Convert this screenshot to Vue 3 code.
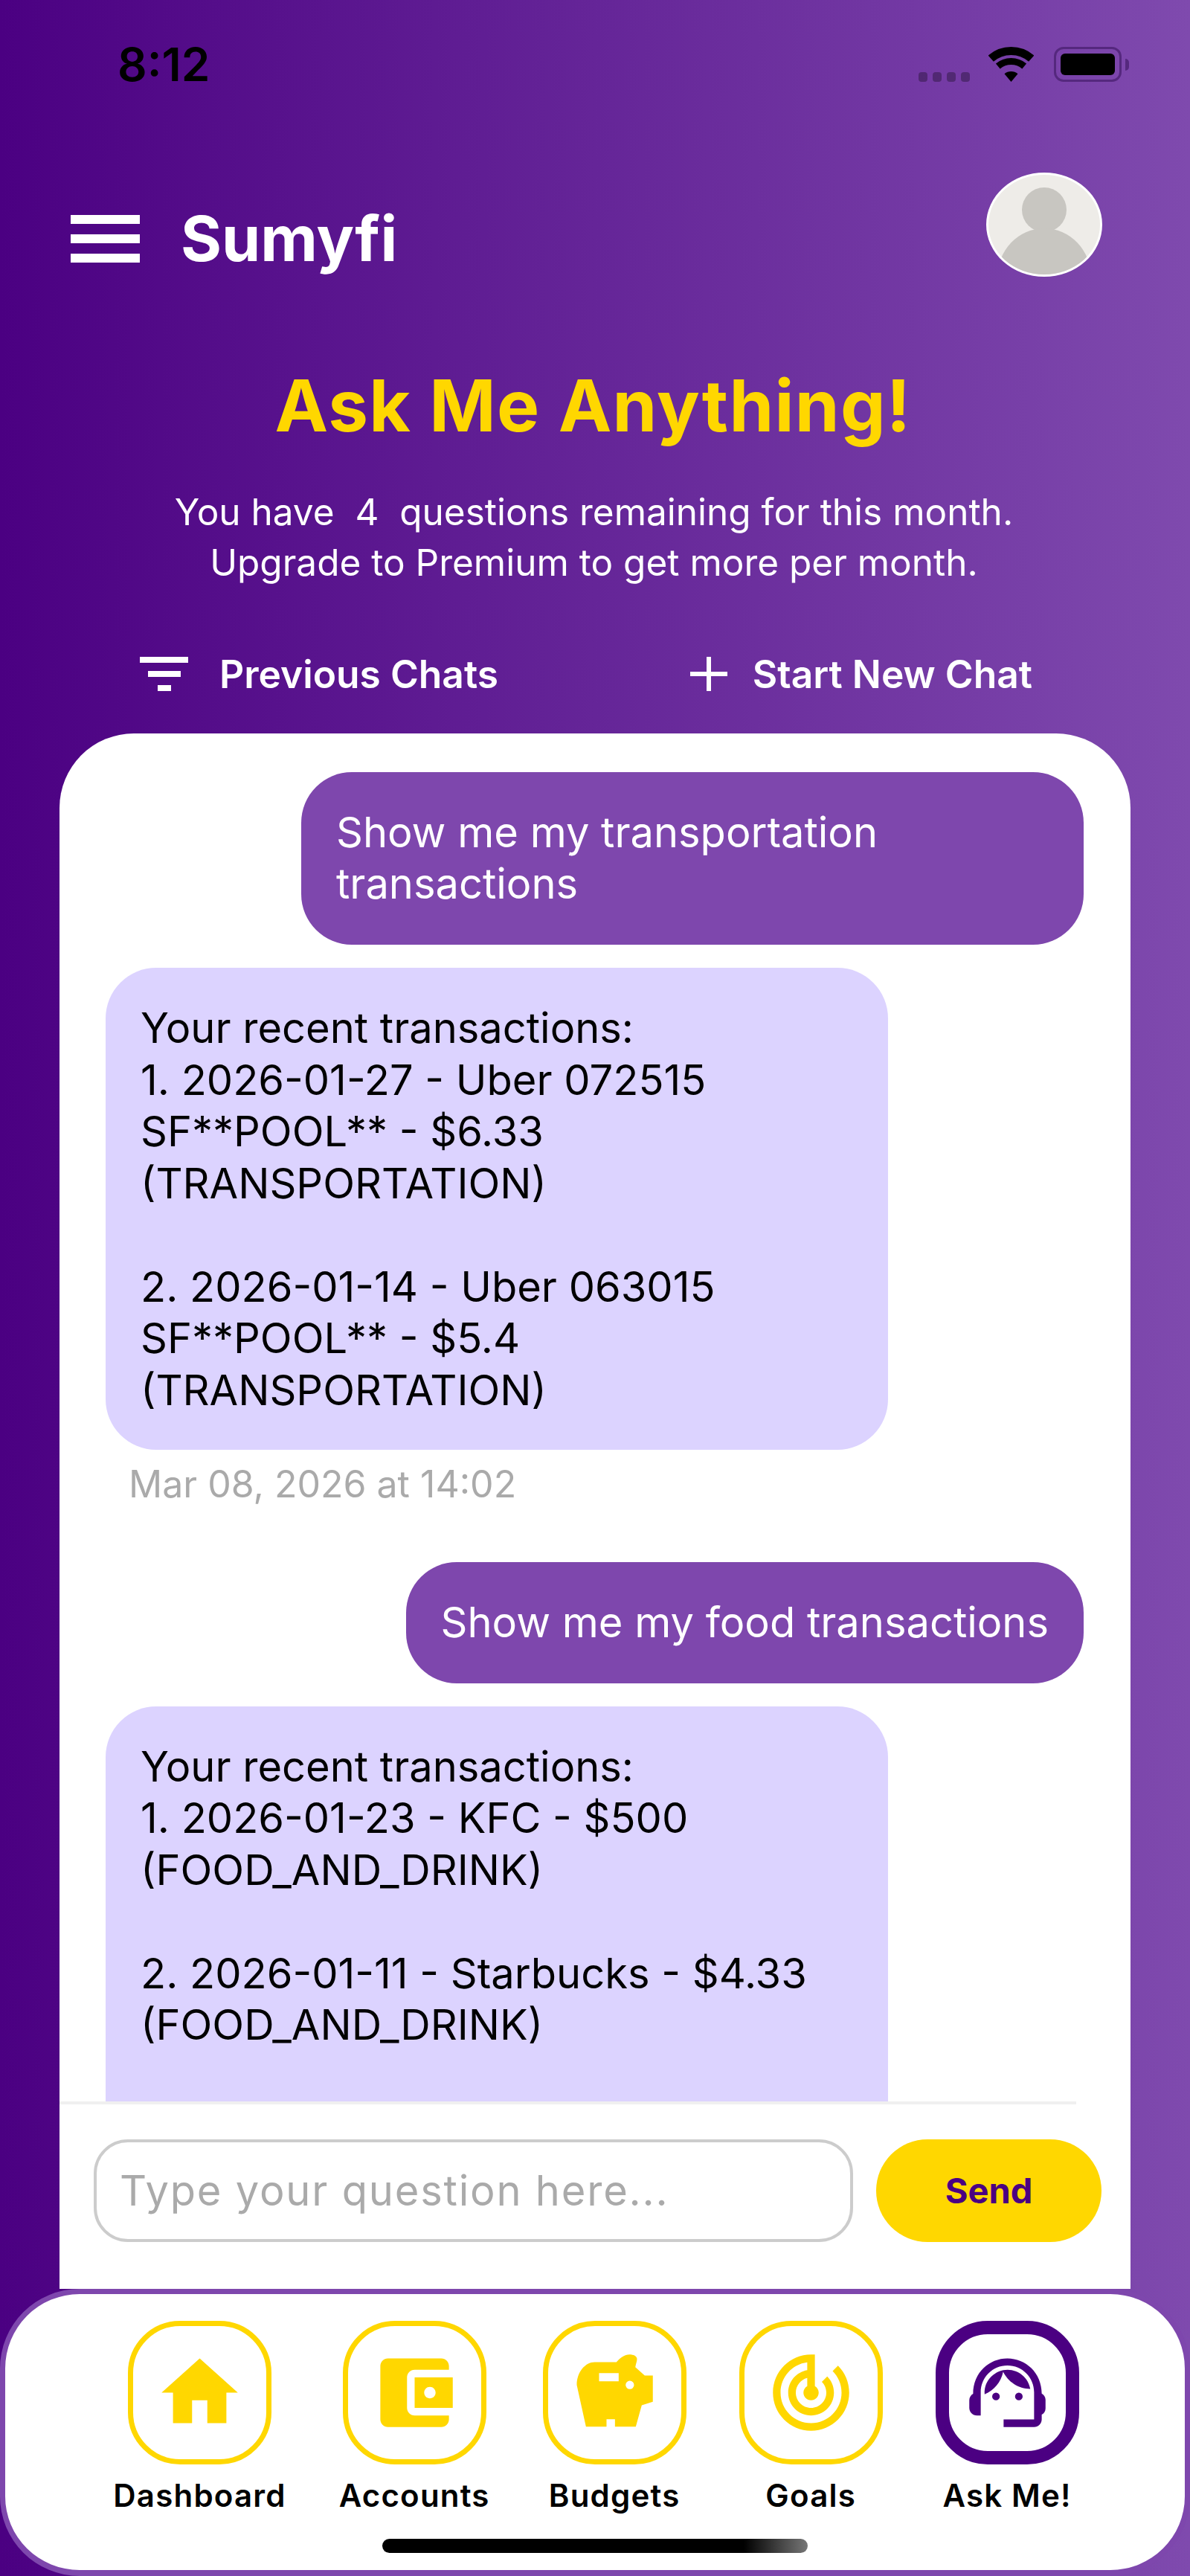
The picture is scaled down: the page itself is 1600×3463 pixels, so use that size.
<script setup>
import { ref } from 'vue';

const question = ref('');

const chats = [
  {
    ask: 'Show me my transportation transactions',
    answer: 'Your recent transactions:\n1. 2026-01-27 - Uber 072515\nSF**POOL** - $6.33\n(TRANSPORTATION)\n\n2. 2026-01-14 - Uber 063015\nSF**POOL** - $5.4\n(TRANSPORTATION)',
    time: 'Mar 08, 2026 at 14:02',
  },
  {
    ask: 'Show me my food transactions',
    answer: 'Your recent transactions:\n1. 2026-01-23 - KFC - $500\n(FOOD_AND_DRINK)\n\n2. 2026-01-11 - Starbucks - $4.33\n(FOOD_AND_DRINK)',
    time: '',
  },
];

const tabs = [
  { label: 'Dashboard', paths: ['M10 20v-6h4v6h5v-8h3L12 3 2 12h3v8z'] },
  {
    label: 'Accounts',
    paths: ['M21 18v1c0 1.1-.9 2-2 2H5c-1.11 0-2-.9-2-2V5c0-1.1.89-2 2-2h14c1.1 0 2 .9 2 2v1h-9c-1.11 0-2 .9-2 2v8c0 1.1.89 2 2 2h9zm-9-2h10V8H12v8zm4-2.5c-.83 0-1.5-.67-1.5-1.5s.67-1.5 1.5-1.5 1.5.67 1.5 1.5-.67 1.5-1.5 1.5z'],
  },
  {
    label: 'Budgets',
    paths: ['M2.05 9.98C2.05 6.6 4.3 4 6.73 4h5.72c.9-1.2 2.2-2 3.4-2.02 1.1 0 2 .4 2 1.2 0 .6-.3 1.3-.44 2.12L19.87 7.51H22v6.9l-2.91.91-1.56 5.59h-5.46v-1.95H9.85v1.95H4.46zM7.9 6.86V9h5.14V6.86zM15.97 8.88a1.1 1.1 0 1 0 0 2.2 1.1 1.1 0 0 0 0-2.2z'],
  },
  {
    label: 'Goals',
    paths: ['M19.07 4.93l-1.41 1.41C19.1 7.79 20 9.79 20 12c0 4.42-3.58 8-8 8s-8-3.58-8-8c0-4.08 3.05-7.44 7-7.93v2.02C8.16 6.57 6 9.03 6 12c0 3.31 2.69 6 6 6s6-2.69 6-6c0-1.66-.67-3.16-1.76-4.24l-1.41 1.41C15.55 9.9 16 10.9 16 12c0 2.21-1.79 4-4 4s-4-1.79-4-4c0-1.86 1.28-3.41 3-3.86v2.14c-.6.35-1 .98-1 1.72 0 1.1.9 2 2 2s2-.9 2-2c0-.74-.4-1.38-1-1.72V2h-1C6.48 2 2 6.48 2 12s4.48 10 10 10 10-4.48 10-10c0-2.76-1.12-5.26-2.93-7.07z'],
  },
  {
    label: 'Ask Me!',
    active: true,
    paths: [
      'M21 12.22C21 6.73 16.74 3 12 3c-4.69 0-9 3.65-9 9.28-.6.34-1 .98-1 1.72v2c0 1.1.9 2 2 2h1v-6.1c0-3.87 3.13-7 7-7s7 3.13 7 7V19h-8v2h8c1.1 0 2-.9 2-2v-1.22c.59-.31 1-.92 1-1.64v-2.3c0-.7-.41-1.31-1-1.62z',
      'M8 13a1 1 0 1 0 2 0 1 1 0 0 0-2 0zM14 13a1 1 0 1 0 2 0 1 1 0 0 0-2 0z',
      'M18 11.03C17.52 8.18 15.04 6 12.05 6c-3.03 0-6.29 2.51-6.03 6.45 2.47-1.01 4.33-3.21 4.86-5.89 1.31 2.63 4 4.44 7.12 4.47z',
    ],
  },
];
</script>

<template>
  <div class="screen">
    <div class="status">
      <span class="clock">8:12</span>
      <div class="status-icons">
        <div class="signal"><i></i><i></i><i></i><i></i></div>
        <svg class="wifi" viewBox="0 0 61 47" fill="none" stroke="#000">
          <path d="M3.3 15.7A41.5 41.5 0 0 1 57.7 15.7" stroke-width="11" />
          <path d="M12.8 26A27.5 27.5 0 0 1 48.2 26" stroke-width="9" />
          <path d="M21.5 36.3L30.5 47L39.5 36.3A14 14 0 0 0 21.5 36.3Z" fill="#000" stroke="none" />
        </svg>
        <div class="battery"><span></span></div>
        <div class="battery-nub"></div>
      </div>
    </div>

    <header class="top">
      <div class="brand">
        <div class="burger"><span></span><span></span><span></span></div>
        <span class="brand-name">Sumyfi</span>
      </div>
      <div class="avatar">
        <svg viewBox="0 0 150 134">
          <ellipse cx="75" cy="47" rx="30" ry="30" fill="#c8c6c1" />
          <ellipse cx="75" cy="138" rx="63" ry="66" fill="#c8c6c1" />
        </svg>
      </div>
    </header>

    <h1 class="title">Ask Me Anything!</h1>
    <p class="intro">You have&nbsp; 4&nbsp; questions remaining for this month.<br />Upgrade to Premium to get more per month.</p>

    <div class="actions">
      <div class="action">
        <div class="filter-icon"><span></span><span></span><span></span></div>
        <span>Previous Chats</span>
      </div>
      <div class="action action-new">
        <svg class="plus-icon" viewBox="0 0 50 50"><path d="M22 2h6v20h22v6H28v20h-6V28H0v-6h22z" fill="#fff" /></svg>
        <span>Start New Chat</span>
      </div>
    </div>

    <main class="card">
      <div class="messages">
        <section v-for="chat in chats" :key="chat.ask" class="group">
          <div class="bubble user">{{ chat.ask }}</div>
          <div class="bubble bot">{{ chat.answer }}</div>
          <div v-if="chat.time" class="stamp">{{ chat.time }}</div>
        </section>
      </div>
      <div class="divider"></div>
      <div class="composer">
        <input v-model="question" class="question" type="text" placeholder="Type your question here..." />
        <button class="send" type="button">Send</button>
      </div>
    </main>

    <nav class="tabbar">
      <div class="tabs">
        <div v-for="tab in tabs" :key="tab.label" class="tab" :class="{ active: tab.active }">
          <div class="tab-box">
            <svg viewBox="0 0 24 24"><path v-for="d in tab.paths" :key="d" :d="d" fill-rule="evenodd" /></svg>
          </div>
          <span class="tab-label">{{ tab.label }}</span>
        </div>
      </div>
      <div class="home-bar"></div>
    </nav>
  </div>
</template>

<style scoped>
.screen {
  display: flex;
  flex-direction: column;
  width: 1600px;
  height: 3463px;
  overflow: hidden;
  background: linear-gradient(90deg, #4b0082, #7f4aae);
  font-family: Inter, "Liberation Sans", sans-serif;
  color: #fff;
}

/* status bar */
.status {
  display: flex;
  justify-content: space-between;
  height: 232px;
  padding: 0 82px 0 158px;
  box-sizing: border-box;
}

.clock {
  margin-top: 51px;
  font-size: 62px;
  line-height: 72px;
  font-weight: 600;
  color: #000;
}

.status-icons {
  display: flex;
  align-items: flex-start;
  padding-top: 63px;
}

.signal {
  display: flex;
  gap: 7px;
  margin-top: 34px;
  margin-right: 25px;
}

.signal i {
  width: 12px;
  height: 13px;
  border-radius: 4px;
  background: rgba(0, 0, 0, 0.3);
}

.wifi {
  width: 61px;
  height: 47px;
  margin-right: 27px;
}

.battery {
  box-sizing: border-box;
  width: 91px;
  height: 47px;
  padding: 6px;
  border: 3px solid #55287e;
  border-radius: 13px;
}

.battery span {
  display: block;
  height: 100%;
  border-radius: 6px;
  background: #000;
}

.battery-nub {
  width: 5px;
  height: 16px;
  margin: 16px 0 0 5px;
  border-radius: 0 8px 8px 0;
  background: #55287e;
}

/* header */
.top {
  display: flex;
  justify-content: space-between;
  align-items: flex-start;
  padding: 0 118px 0 95px;
}

.brand {
  display: flex;
  align-items: center;
  gap: 55px;
  margin-top: 39px;
}

.burger {
  display: flex;
  flex-direction: column;
  gap: 14px;
  width: 93px;
}

.burger span {
  height: 12px;
  background: #fff;
}

.brand-name {
  font-size: 84px;
  line-height: 100px;
  font-weight: 700;
}

.avatar {
  box-sizing: border-box;
  width: 156px;
  height: 140px;
  overflow: hidden;
  border: 3px solid #fff;
  border-radius: 50%;
  background: #eeece8;
}

.avatar svg {
  display: block;
  width: 100%;
  height: 100%;
}

.title {
  margin: 115px 5px 0 0;
  font-size: 96px;
  line-height: 116px;
  font-weight: 700;
  letter-spacing: 1.3px;
  text-align: center;
  color: #ffd700;
}

.intro {
  margin: 51px 3px 0 0;
  font-size: 49.5px;
  line-height: 68px;
  text-align: center;
}

.actions {
  display: flex;
  justify-content: space-between;
  margin-top: 86px;
  padding: 0 212px 0 188px;
}

.action {
  display: flex;
  align-items: center;
  gap: 42px;
  font-size: 51.5px;
  line-height: 60px;
  font-weight: 600;
}

.action-new {
  gap: 34px;
}

.filter-icon {
  display: flex;
  flex-direction: column;
  align-items: center;
  gap: 11px;
  width: 65px;
}

.filter-icon span {
  height: 8px;
  background: #fff;
}

.filter-icon span:nth-child(1) {
  width: 65px;
}

.filter-icon span:nth-child(2) {
  width: 44px;
}

.filter-icon span:nth-child(3) {
  width: 18px;
}

.plus-icon {
  width: 50px;
  height: 50px;
}

/* chat card */
.card {
  display: flex;
  flex: 1;
  flex-direction: column;
  min-height: 0;
  margin: 50px 80px 0;
  border-radius: 100px 100px 0 0;
  background: #fff;
}

.messages {
  flex: 1;
  min-height: 0;
  overflow: hidden;
  padding: 52px 63px 0 62px;
}

.group {
  display: flex;
  flex-direction: column;
  gap: 31px;
  margin-bottom: 75px;
}

.bubble {
  box-sizing: border-box;
  max-width: 1052px;
  font-size: 56px;
  line-height: 69.5px;
}

.user {
  align-self: flex-end;
  padding: 46.5px 47px;
  border-radius: 68px;
  background: #7e47ad;
  color: #fff;
}

.bot {
  align-self: flex-start;
  width: 1053px;
  min-height: 648px;
  padding: 47px 47px 44px;
  border-radius: 68px;
  background: #dcd3ff;
  color: #000;
  white-space: pre-line;
}

.stamp {
  margin: -15px 0 0 31px;
  font-size: 50px;
  line-height: 60px;
  color: #aaa;
}

.divider {
  height: 4px;
  margin-right: 73px;
  background: #f0f0f0;
}

.composer {
  display: flex;
  gap: 31px;
  padding: 47px 39px 63px 46px;
}

.question {
  box-sizing: border-box;
  width: 1021px;
  height: 138px;
  padding: 0 31px;
  border: 4px solid #ccc;
  border-radius: 46px;
  outline: none;
  background: #fff;
  font-family: inherit;
  font-size: 56px;
  letter-spacing: 1.8px;
}

.question::placeholder {
  color: #aaa;
}

.send {
  width: 303px;
  height: 138px;
  padding: 0 0 2px;
  border: none;
  border-radius: 69px;
  background: #ffd700;
  color: #4b0082;
  font-family: inherit;
  font-size: 47px;
  font-weight: 700;
}

/* bottom tabs */
.tabbar {
  position: relative;
  display: flex;
  flex-direction: column;
  align-items: center;
  box-sizing: border-box;
  height: 386px;
  border: 7px solid #7e47ad;
  border-bottom-width: 8px;
  border-radius: 107px;
  background: #fff;
  color: #000;
}

.tabs {
  display: flex;
  justify-content: center;
  gap: 71px;
  padding: 36px 0 0 3px;
}

.tab {
  display: flex;
  flex-direction: column;
  align-items: center;
  gap: 17px;
}

.tab-box {
  display: flex;
  align-items: center;
  justify-content: center;
  box-sizing: border-box;
  width: 193px;
  height: 193px;
  border: 7px solid #ffd700;
  border-radius: 70px;
  fill: #ffd700;
}

.tab-box svg {
  flex: none;
  width: 123px;
  height: 123px;
}

.tab.active .tab-box {
  border: 18px solid #4b0082;
  fill: #4b0082;
}

.tab-label {
  font-size: 42px;
  line-height: 50px;
  font-weight: 600;
  letter-spacing: 1.2px;
}

.home-bar {
  width: 572px;
  height: 19px;
  margin-top: 33px;
  border-radius: 10px;
  background: linear-gradient(90deg, #000 85%, #777);
}
</style>
